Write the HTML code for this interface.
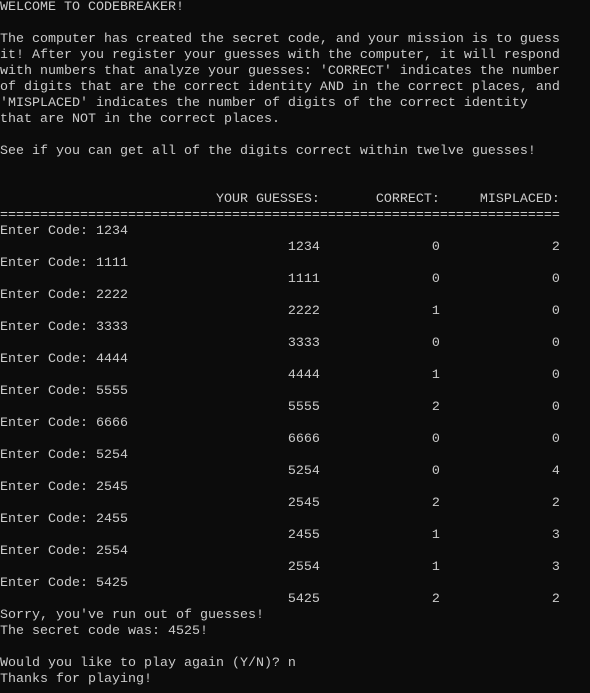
<!DOCTYPE html>
<html><head><meta charset="utf-8"><style>
html,body{margin:0;padding:0;background:#0c0c0c;width:590px;height:693px;overflow:hidden}
pre{margin:0;padding:0;color:#cccccc;font-family:"Liberation Mono",monospace;font-size:13.33px;line-height:16px;white-space:pre}
</style></head><body><pre>WELCOME TO CODEBREAKER!

The computer has created the secret code, and your mission is to guess
it! After you register your guesses with the computer, it will respond
with numbers that analyze your guesses: 'CORRECT' indicates the number
of digits that are the correct identity AND in the correct places, and
'MISPLACED' indicates the number of digits of the correct identity
that are NOT in the correct places.

See if you can get all of the digits correct within twelve guesses!


                           YOUR GUESSES:       CORRECT:     MISPLACED:
======================================================================
Enter Code: 1234
                                    1234              0              2
Enter Code: 1111
                                    1111              0              0
Enter Code: 2222
                                    2222              1              0
Enter Code: 3333
                                    3333              0              0
Enter Code: 4444
                                    4444              1              0
Enter Code: 5555
                                    5555              2              0
Enter Code: 6666
                                    6666              0              0
Enter Code: 5254
                                    5254              0              4
Enter Code: 2545
                                    2545              2              2
Enter Code: 2455
                                    2455              1              3
Enter Code: 2554
                                    2554              1              3
Enter Code: 5425
                                    5425              2              2
Sorry, you've run out of guesses!
The secret code was: 4525!

Would you like to play again (Y/N)? n
Thanks for playing!</pre></body></html>
